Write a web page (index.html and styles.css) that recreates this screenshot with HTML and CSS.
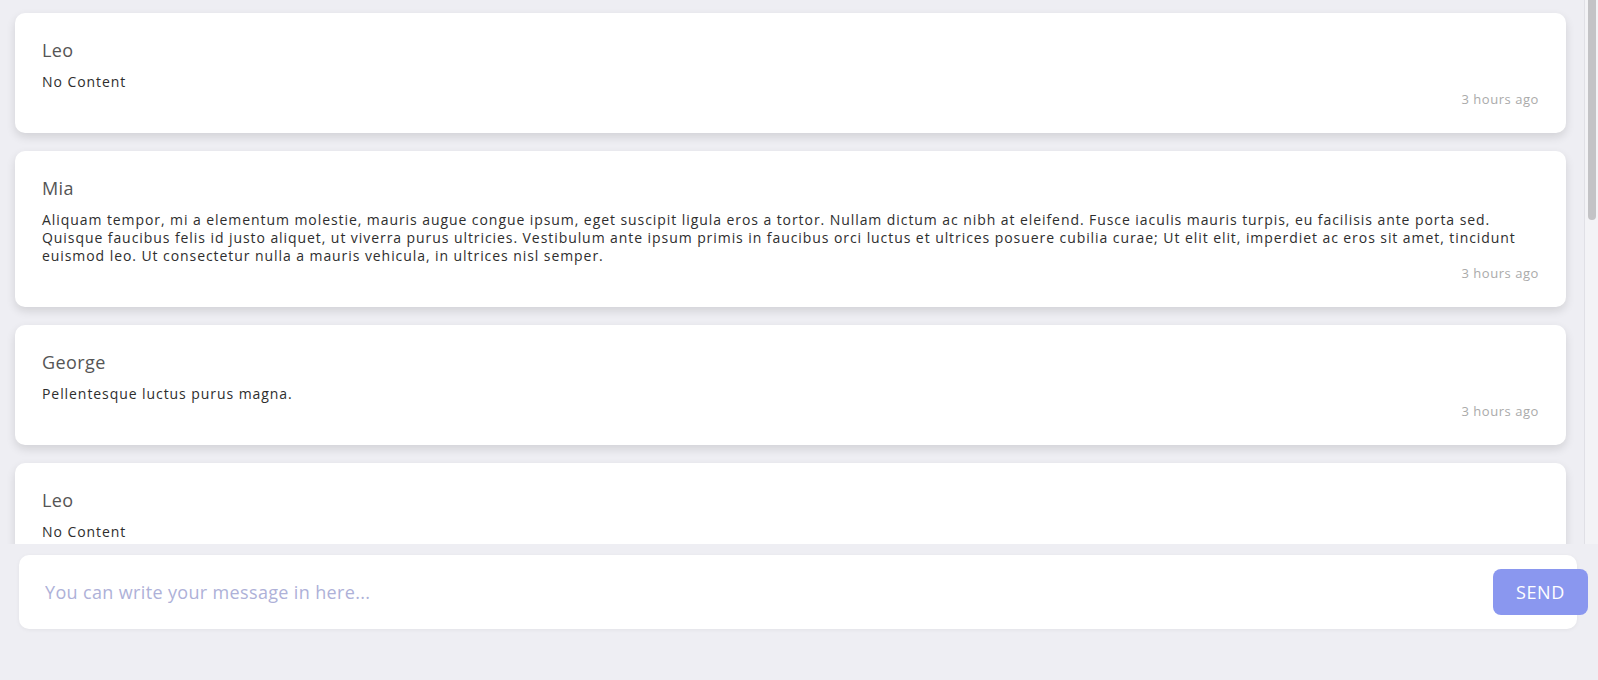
FILE: index.html
```html
<!DOCTYPE html>
<html lang="en">
<head>
<meta charset="utf-8">
<title>Chat</title>
<link rel="stylesheet" href="styles.css">
</head>
<body>
<div class="app">
  <div class="pane">
    <div class="messages">
      <div class="card">
        <div class="name">Leo</div>
        <div class="text">No Content</div>
        <div class="time">3 hours ago</div>
      </div>
      <div class="card">
        <div class="name">Mia</div>
        <div class="text">Aliquam tempor, mi a elementum molestie, mauris augue congue ipsum, eget suscipit ligula eros a tortor. Nullam dictum ac nibh at eleifend. Fusce iaculis mauris turpis, eu facilisis ante porta sed. Quisque faucibus felis id justo aliquet, ut viverra purus ultricies. Vestibulum ante ipsum primis in faucibus orci luctus et ultrices posuere cubilia curae; Ut elit elit, imperdiet ac eros sit amet, tincidunt euismod leo. Ut consectetur nulla a mauris vehicula, in ultrices nisl semper.</div>
        <div class="time">3 hours ago</div>
      </div>
      <div class="card">
        <div class="name">George</div>
        <div class="text">Pellentesque luctus purus magna.</div>
        <div class="time">3 hours ago</div>
      </div>
      <div class="card">
        <div class="name">Leo</div>
        <div class="text">No Content</div>
        <div class="time">3 hours ago</div>
      </div>
      <div class="card">
        <div class="name">Mia</div>
        <div class="text">Aliquam tempor, mi a elementum molestie, mauris augue congue ipsum, eget suscipit ligula eros a tortor. Nullam dictum ac nibh at eleifend. Fusce iaculis mauris turpis, eu facilisis ante porta sed. Quisque faucibus felis id justo aliquet, ut viverra purus ultricies. Vestibulum ante ipsum primis in faucibus orci luctus et ultrices posuere cubilia curae; Ut elit elit, imperdiet ac eros sit amet, tincidunt euismod leo. Ut consectetur nulla a mauris vehicula, in ultrices nisl semper.</div>
        <div class="time">3 hours ago</div>
      </div>
      <div class="card">
        <div class="name">George</div>
        <div class="text">Pellentesque luctus purus magna.</div>
        <div class="time">3 hours ago</div>
      </div>
    </div>
    <div class="scrollbar">
      <div class="thumb"></div>
    </div>
  </div>
  <div class="composer">
    <div class="composer-box">
      <input class="composer-input" type="text" placeholder="You can write your message in here...">
      <button class="send" type="button">SEND</button>
    </div>
  </div>
</div>
</body>
</html>
```

FILE: styles.css
```css
html, body {
  margin: 0;
  padding: 0;
  height: 100%;
}

body {
  background: #eeeef3;
  font-family: "Open Sans", "DejaVu Sans", sans-serif;
  color: #333;
  overflow: hidden;
}

.app {
  height: 680px;
  display: flex;
  flex-direction: column;
}

.pane {
  height: 544px;
  flex: none;
  display: flex;
  overflow: hidden;
}

.messages {
  flex: 1;
  min-width: 0;
  overflow: hidden;
  padding: 13px 18px 2px 15px;
  display: flex;
  flex-direction: column;
  gap: 18px;
}

.scrollbar {
  width: 13px;
  flex: none;
  background: #f3f3f6;
  border-left: 1px solid #e0e0e6;
  display: flex;
  flex-direction: column;
}

.thumb {
  height: 220px;
  margin: 0 2px 0 3px;
  background: #c3c3c6;
  border-radius: 0 0 4px 4px;
}

.card {
  flex: none;
  background: #fff;
  border-radius: 10px;
  box-shadow: 0 4px 10px rgba(0, 0, 0, 0.12);
  padding: 26px 27px 26px 27px;
  display: flex;
  flex-direction: column;
}

.name {
  font-size: 18px;
  line-height: 22px;
  color: #555;
  letter-spacing: 0.4px;
  margin-bottom: 12px;
}

.text {
  font-size: 14px;
  line-height: 18px;
  color: #2e2e2e;
  letter-spacing: 0.93px;
}

.time {
  align-self: flex-end;
  font-size: 13px;
  line-height: 16px;
  color: #aaa;
  letter-spacing: 0.55px;
}

.composer {
  padding: 11px 21px 51px 19px;
}

.composer-box {
  height: 74px;
  background: #fff;
  border-radius: 10px;
  box-shadow: 0 1px 4px rgba(0, 0, 0, 0.05);
  display: flex;
  align-items: center;
  padding-left: 26px;
}

.composer-input {
  flex: 1;
  border: none;
  outline: none;
  background: transparent;
  font-family: "Open Sans", "DejaVu Sans", sans-serif;
  font-size: 18px;
  letter-spacing: 0.35px;
  color: #333;
  padding: 0;
}

.composer-input::placeholder {
  color: #aeb1d8;
}

.send {
  width: 95px;
  height: 46px;
  margin-right: -11px;
  border: none;
  border-radius: 8px;
  background: #8a97ef;
  color: #fff;
  font-family: "Open Sans", "DejaVu Sans", sans-serif;
  font-size: 18px;
  letter-spacing: 0.6px;
  cursor: pointer;
}
```
